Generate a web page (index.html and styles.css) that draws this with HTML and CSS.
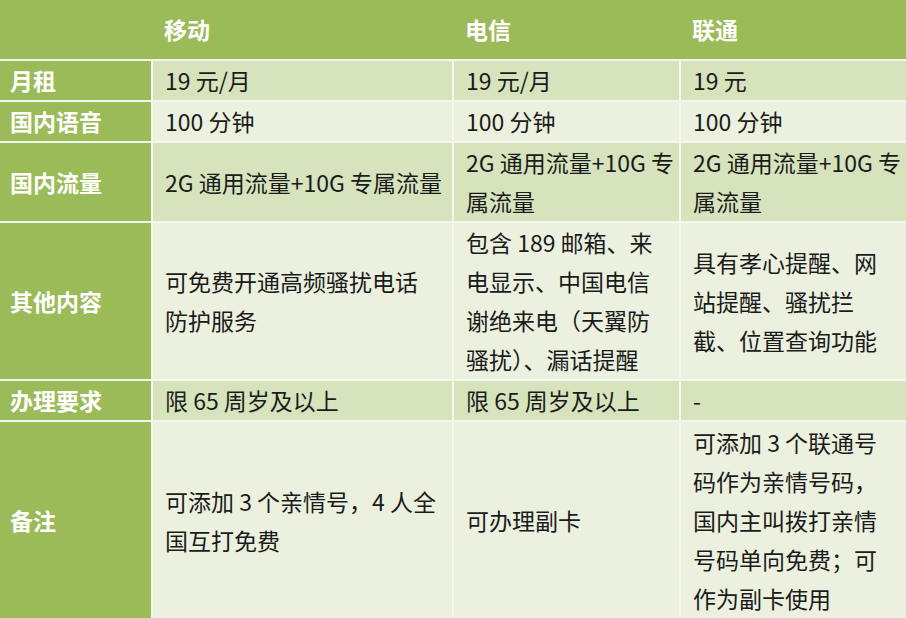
FILE: index.html
```html
<!DOCTYPE html>
<html lang="zh-CN">
<head>
<meta charset="utf-8">
<title>套餐对比</title>
<link rel="stylesheet" href="styles.css">
</head>
<body>
<table class="plans">
  <colgroup>
    <col class="c-label">
    <col class="c-mobile">
    <col class="c-telecom">
    <col class="c-unicom">
  </colgroup>
  <thead>
    <tr class="head-row">
      <th class="corner"></th>
      <th>移动</th>
      <th>电信</th>
      <th>联通</th>
    </tr>
  </thead>
  <tbody>
    <tr class="dark">
      <th>月租</th>
      <td>19 元/月</td>
      <td>19 元/月</td>
      <td>19 元</td>
    </tr>
    <tr class="light">
      <th>国内语音</th>
      <td>100 分钟</td>
      <td>100 分钟</td>
      <td>100 分钟</td>
    </tr>
    <tr class="dark">
      <th>国内流量</th>
      <td>2G 通用流量+10G 专属流量</td>
      <td>2G 通用流量+10G 专<br>属流量</td>
      <td>2G 通用流量+10G 专<br>属流量</td>
    </tr>
    <tr class="light">
      <th>其他内容</th>
      <td>可免费开通高频骚扰电话<br>防护服务</td>
      <td>包含 189 邮箱、来<br>电显示、中国电信<br>谢绝来电（天翼防<br>骚扰）、漏话提醒</td>
      <td>具有孝心提醒、网<br>站提醒、骚扰拦<br>截、位置查询功能</td>
    </tr>
    <tr class="dark">
      <th>办理要求</th>
      <td>限 65 周岁及以上</td>
      <td>限 65 周岁及以上</td>
      <td>-</td>
    </tr>
    <tr class="light tall">
      <th>备注</th>
      <td>可添加 3 个亲情号，4 人全<br>国互打免费</td>
      <td>可办理副卡</td>
      <td>可添加 3 个联通号<br>码作为亲情号码，<br>国内主叫拨打亲情<br>号码单向免费；可<br>作为副卡使用</td>
    </tr>
  </tbody>
</table>
</body>
</html>
```

FILE: styles.css
```css
html, body {
  margin: 0;
  padding: 0;
  background: #ebf1de;
}

.plans {
  width: 906px;
  border-collapse: collapse;
  table-layout: fixed;
  font-family: "Noto Sans CJK SC", "Noto Sans", sans-serif;
  font-size: 23px;
  line-height: 39px;
  color: #1b1b1b;
}

.c-label { width: 152px; }
.c-mobile { width: 301px; }
.c-telecom { width: 227px; }
.c-unicom { width: 226px; }

.plans th,
.plans td {
  padding: 0 0 0 12px;
  vertical-align: middle;
  text-align: left;
  white-space: nowrap;
  border: 2px solid #f4f7ee;
}

.head-row th {
  height: 59px;
  background: #9bbb59;
  color: #ffffff;
  font-weight: 700;
  border-top: 0;
  border-left: 0;
  border-right: 0;
  border-bottom: 2px solid #f4f7ee;
}

.plans tbody th {
  background: #9bbb59;
  color: #ffffff;
  font-weight: 700;
  padding-left: 10px;
  border-left: 0;
}

.plans td:last-child {
  border-right: 0;
}

.dark td {
  background: #d6e3bc;
}

.light td {
  background: #ebf1de;
}

.tall th,
.tall td {
  height: 197px;
  border-bottom: 0;
}
```
